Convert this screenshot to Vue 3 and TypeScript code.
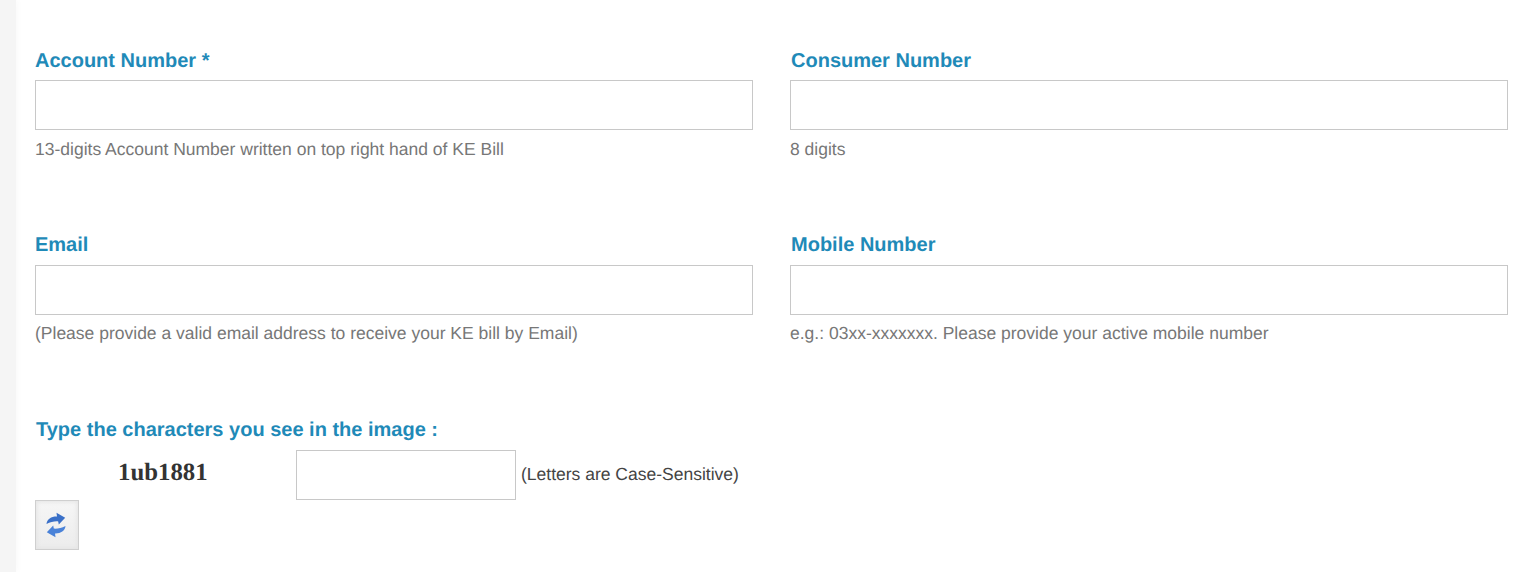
<script setup lang="ts">
interface Field {
  label: string
  hint: string
  type: string
}

const fields: Field[] = [
  { label: 'Account Number *', hint: '13-digits Account Number written on top right hand of KE Bill', type: 'text' },
  { label: 'Consumer Number', hint: '8 digits', type: 'text' },
  { label: 'Email', hint: '(Please provide a valid email address to receive your KE bill by Email)', type: 'email' },
  { label: 'Mobile Number', hint: 'e.g.: 03xx-xxxxxxx. Please provide your active mobile number', type: 'tel' },
]
</script>

<template>
  <div class="page">
    <div class="gutter"></div>
    <form class="form" @submit.prevent>
      <div class="grid">
        <div v-for="f in fields" :key="f.label" class="field">
          <label class="label">{{ f.label }}</label>
          <input class="input" :type="f.type" />
          <div class="hint">{{ f.hint }}</div>
        </div>
      </div>
      <div class="captcha">
        <label class="label captcha-label">Type the characters you see in the image :</label>
        <div class="captcha-row">
          <div class="code">1ub1881</div>
          <input class="input captcha-input" type="text" />
          <span class="note">(Letters are Case-Sensitive)</span>
        </div>
        <button class="refresh" type="button" aria-label="Refresh">
          <svg class="refresh-icon" width="20" height="26" viewBox="0 0 20 26">
            <path d="M0.5 12 C1 7 5.5 4.4 11 4.6 L10.5 0.8 L19.2 5.8 L12.8 12.4 L12.2 9.4 C8 9.2 4.5 10 0.5 12 Z" fill="#3a70c8" />
            <path d="M19.5 14 C19 19 14.5 21.6 9 21.4 L9.5 25.2 L0.8 20.2 L7.2 13.6 L7.8 16.6 C12 16.8 15.5 16 19.5 14 Z" fill="#4a82d8" />
          </svg>
        </button>
      </div>
    </form>
  </div>
</template>

<style>
html, body {
  margin: 0;
  background: #fff;
}
</style>

<style scoped>
.page {
  display: flex;
  width: 1528px;
  height: 572px;
  overflow: hidden;
  background: #fff;
  font-family: "Liberation Sans", Arial, sans-serif;
  text-rendering: geometricPrecision;
}
.gutter {
  flex: 0 0 16px;
  background: #f5f5f5;
  box-shadow: 2px 0 6px rgba(0, 0, 0, 0.025);
}
.form {
  flex: 1;
  padding: 45.8px 20px 0 19px;
  box-sizing: border-box;
}
.grid {
  display: grid;
  grid-template-columns: 718px 718px;
  column-gap: 37px;
  row-gap: 50px;
}
.field {
  display: flex;
  flex-direction: column;
  height: 134.5px;
}
.field:nth-child(even) .label {
  padding-left: 1px;
}
.label {
  display: block;
  font-size: 20px;
  line-height: 30px;
  font-weight: 700;
  color: #1f8ab8;
}
.input {
  display: block;
  box-sizing: border-box;
  height: 50px;
  width: 100%;
  margin: 4.3px 0 0;
  padding: 0 8px;
  border: 1px solid #c8c8c8;
  background: #fff;
  outline: none;
}
.hint {
  margin-top: 7.7px;
  font-size: 17.5px;
  line-height: 22px;
  color: #777;
}
.captcha {
  margin-top: 50px;
}
.captcha-label {
  margin-left: 1px;
}
.captcha-row {
  display: flex;
  align-items: center;
  margin-top: 5px;
}
.code {
  flex: 0 0 261px;
  box-sizing: border-box;
  padding: 0 0 4px 83px;
  font-family: "Liberation Serif", "Times New Roman", serif;
  font-size: 24.8px;
  font-weight: 700;
  line-height: 44px;
  color: #333;
}
.captcha-input {
  flex: 0 0 220px;
  width: 220px;
  margin: 0;
}
.note {
  margin-left: 5px;
  font-size: 17.5px;
  color: #444;
}
.refresh {
  display: flex;
  align-items: center;
  justify-content: center;
  width: 44px;
  height: 50px;
  padding: 0 2px 0 0;
  border: 1px solid #cfcfcf;
  background: linear-gradient(to bottom, #f6f6f6, #ececec);
  box-shadow: inset 0 0 4px 1px #e4e4e4;
}
.refresh-icon {
  filter: blur(0.4px);
}
</style>
